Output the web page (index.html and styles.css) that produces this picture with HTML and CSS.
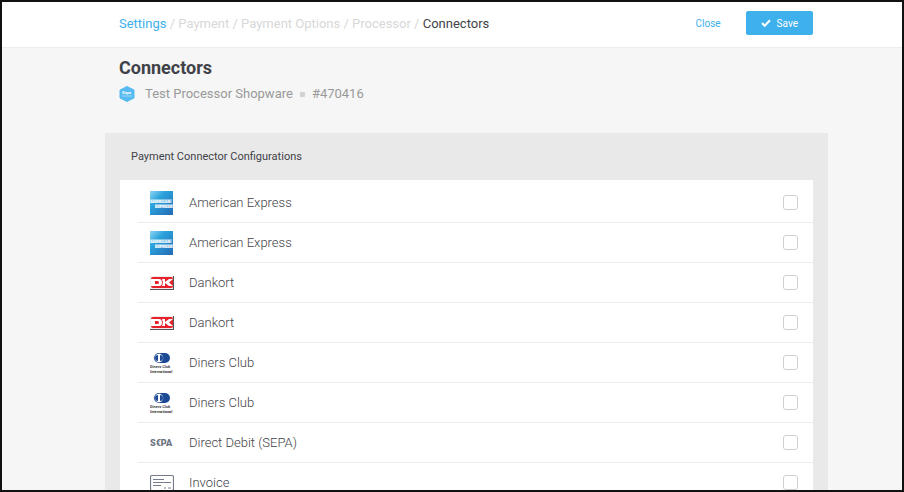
FILE: index.html
```html
<!DOCTYPE html>
<html lang="en">
<head>
  <meta charset="UTF-8" />
  <meta name="viewport" content="width=device-width, initial-scale=1.0"/>
  <title>Connectors</title>
  <link rel="stylesheet" href="styles.css">
</head>
<body>

  <!-- Logos used in the list -->
  <svg class="sprite" aria-hidden="true">
    <defs>
      <linearGradient id="amexFill" x1="0" y1="0" x2="1" y2="1">
        <stop offset="0" stop-color="#8fd3f3" />
        <stop offset="0.35" stop-color="#2ba3dc" />
        <stop offset="1" stop-color="#2468b4" />
      </linearGradient>
    </defs>
    <symbol id="amex" viewBox="0 0 24 24">
      <rect width="23" height="24" fill="url(#amexFill)" />
      <rect y="8" width="22" height="4" fill="#d3edf8" opacity="0.5" />
      <rect x="5" y="13" width="18" height="4" fill="#d3edf8" opacity="0.5" />
      <text x="0" y="12" font-size="4" font-weight="700" fill="#fff">AMERICAN</text>
      <text x="5" y="17" font-size="4" font-weight="700" fill="#fff">EXPRESS</text>
    </symbol>
    <symbol id="dankort" viewBox="0 0 24 24">
      <path d="M0 5h24v14H0z" fill="#555" />
      <path d="M0 5h23v13H0z" fill="#f4e9e9" />
      <path d="M3 6h18q2 0 2 2v7q0 2-2 2H3q-2 0-2-2V8q0-2 2-2z" fill="#e8202a" />
      <path fill="#fff" fill-rule="evenodd" d="M1 8h8q3 0 3 3.500t-3 3.500H1zM5 10v3h2.500q1.500 0 1.500-1.500T7.500 10zM12 8h3v3l4-3h4l-4 3.500 4 3.500h-4l-4-3v3h-3l1-3.500z" />
    </symbol>
    <symbol id="diners" viewBox="0 0 24 24">
      <path d="M10 2h5a5 5 0 0 1 0 10h-5z" fill="#1d4a97" />
      <circle cx="9" cy="7" r="5" fill="#1d4a97" />
      <circle cx="9" cy="7" r="4.200" fill="#fff" />
      <path d="M8 4v6a3 3 0 0 1 0-6zM10 4v6a3 3 0 0 0 0-6z" fill="#1d4a97" />
      <text x="0" y="17" font-size="4" font-style="italic" font-weight="700" fill="#444">Diners Club</text>
      <text x="0" y="22" font-size="4" font-style="italic" font-weight="700" fill="#333">International</text>
    </symbol>
    <symbol id="sepa" viewBox="0 0 24 24">
      <text x="0" y="15" font-size="9" font-weight="900" fill="#6b7380">S€PA</text>
    </symbol>
    <symbol id="invoice" viewBox="0 0 24 24">
      <g fill="none" stroke="#757c8b">
        <rect x="0.500" y="4.500" width="23" height="15" rx="1.500" stroke-width="1.200" />
        <path d="M3 8.500h11M3 11.500h18M3 14.500h8M14 17h2M18 17h3" />
      </g>
    </symbol>
  </svg>

  <div class="window">
    <header class="topbar">
      <nav class="breadcrumb">
        <a href="#">Settings</a> / Payment / Payment Options / Processor / <span class="current">Connectors</span>
      </nav>
      <div class="actions">
        <a class="close-link" href="#">Close</a>
        <button class="save-button" type="submit" form="connectorForm">
          <svg class="check-icon" viewBox="0 0 10 8" aria-hidden="true"><path d="M1 4l2.700 2.700L9 1.300" fill="none" stroke="#fff" stroke-width="2.200" /></svg>
          Save
        </button>
      </div>
    </header>

    <main class="content">
      <div class="page-title">
        <h1>Connectors</h1>
        <div class="subtitle">
          <svg class="processor-icon" viewBox="0 0 16 16" aria-hidden="true">
            <path d="M8 0.500l7 3.500v8l-7 3.500L1 12V4z" fill="#55bbf0" stroke="#55bbf0" stroke-linejoin="round" />
            <text x="3" y="8" font-size="4" font-weight="700" fill="#fff">Sepa</text>
            <path d="M3 10h10" stroke="#9bd8f7" />
          </svg>
          <span>Test Processor Shopware</span>
          <span class="dot"></span>
          <span>#470416</span>
        </div>
      </div>

      <form class="panel" id="connectorForm">
        <h2>Payment Connector Configurations</h2>
        <ul class="connector-list">
          <li>
            <svg class="logo" aria-hidden="true"><use href="#amex" /></svg>
            <label for="c1">American Express</label>
            <input type="checkbox" id="c1">
          </li>
          <li>
            <svg class="logo" aria-hidden="true"><use href="#amex" /></svg>
            <label for="c2">American Express</label>
            <input type="checkbox" id="c2">
          </li>
          <li>
            <svg class="logo" aria-hidden="true"><use href="#dankort" /></svg>
            <label for="c3">Dankort</label>
            <input type="checkbox" id="c3">
          </li>
          <li>
            <svg class="logo" aria-hidden="true"><use href="#dankort" /></svg>
            <label for="c4">Dankort</label>
            <input type="checkbox" id="c4">
          </li>
          <li>
            <svg class="logo" aria-hidden="true"><use href="#diners" /></svg>
            <label for="c5">Diners Club</label>
            <input type="checkbox" id="c5">
          </li>
          <li>
            <svg class="logo" aria-hidden="true"><use href="#diners" /></svg>
            <label for="c6">Diners Club</label>
            <input type="checkbox" id="c6">
          </li>
          <li>
            <svg class="logo" aria-hidden="true"><use href="#sepa" /></svg>
            <label for="c7">Direct Debit (SEPA)</label>
            <input type="checkbox" id="c7">
          </li>
          <li>
            <svg class="logo" aria-hidden="true"><use href="#invoice" /></svg>
            <label for="c8">Invoice</label>
            <input type="checkbox" id="c8">
          </li>
        </ul>
      </form>
    </main>
  </div>

</body>
</html>
```
FILE: styles.css
```css
:root {
  --accent-color: #3eb0ec;
  --bg-light: #f6f6f6;
  --panel: #e9e9e9;
  --text-dark: #3f4248;
  --text-light: #999999;
}

* {
  box-sizing: border-box;
  margin: 0;
  padding: 0;
}

body {
  font-family: Roboto, sans-serif;
  color: var(--text-dark);
}

.sprite {
  position: absolute;
  width: 0;
  height: 0;
}

.window {
  height: 100vh;
  overflow: hidden;
  border: 2px solid #111;
  background-color: var(--bg-light);
}

.topbar {
  display: flex;
  align-items: center;
  justify-content: space-between;
  height: 46px;
  padding: 0 89px 3px 117px;
  background-color: #fff;
  border-bottom: 1px solid #ececec;
}

.breadcrumb {
  font-size: 13px;
  color: #d8d8d8;
}

.breadcrumb a,
.close-link {
  color: var(--accent-color);
  text-decoration: none;
}

.breadcrumb .current {
  color: var(--text-dark);
}

.actions {
  display: flex;
  align-items: center;
  gap: 25px;
  font-size: 10px;
}

.save-button {
  display: flex;
  align-items: center;
  gap: 6px;
  height: 24px;
  padding: 0 15px;
  font-family: inherit;
  font-size: 10px;
  color: #fff;
  background-color: var(--accent-color);
  border: none;
  border-radius: 2px;
  cursor: pointer;
}

.check-icon {
  width: 10px;
  height: 8px;
}

.content {
  margin: 0 74px 0 103px;
}

.page-title {
  padding: 10px 14px 31px;
}

.page-title h1 {
  font-size: 18px;
  line-height: 20px;
}

.subtitle {
  display: flex;
  align-items: center;
  margin-top: 8px;
  font-size: 13px;
  line-height: 16px;
  color: var(--text-light);
}

.processor-icon {
  width: 16px;
  height: 16px;
  margin-right: 10px;
}

.dot {
  width: 5px;
  height: 5px;
  margin: 0 7px;
  border-radius: 1px;
  background-color: #d2d2d2;
}

.panel {
  padding: 0 15px;
  background-color: var(--panel);
}

.panel h2 {
  padding: 0 11px;
  font-size: 11px;
  font-weight: 400;
  line-height: 47px;
}

.connector-list {
  list-style: none;
  padding: 3px 0 0 18px;
  background-color: #fff;
}

.connector-list li {
  display: flex;
  align-items: center;
  height: 40px;
  padding: 0 15px 0 12px;
  border-bottom: 1px solid #ededed;
}

.logo {
  width: 24px;
  height: 24px;
}

.connector-list label {
  flex: 1;
  padding-left: 15px;
  font-size: 13px;
  font-weight: 300;
}

input[type="checkbox"] {
  appearance: none;
  width: 15px;
  height: 15px;
  border: 1px solid #cfcfcf;
  border-radius: 3px;
  background-color: #fff;
}

input[type="checkbox"]:checked {
  background-color: var(--accent-color);
}
```
